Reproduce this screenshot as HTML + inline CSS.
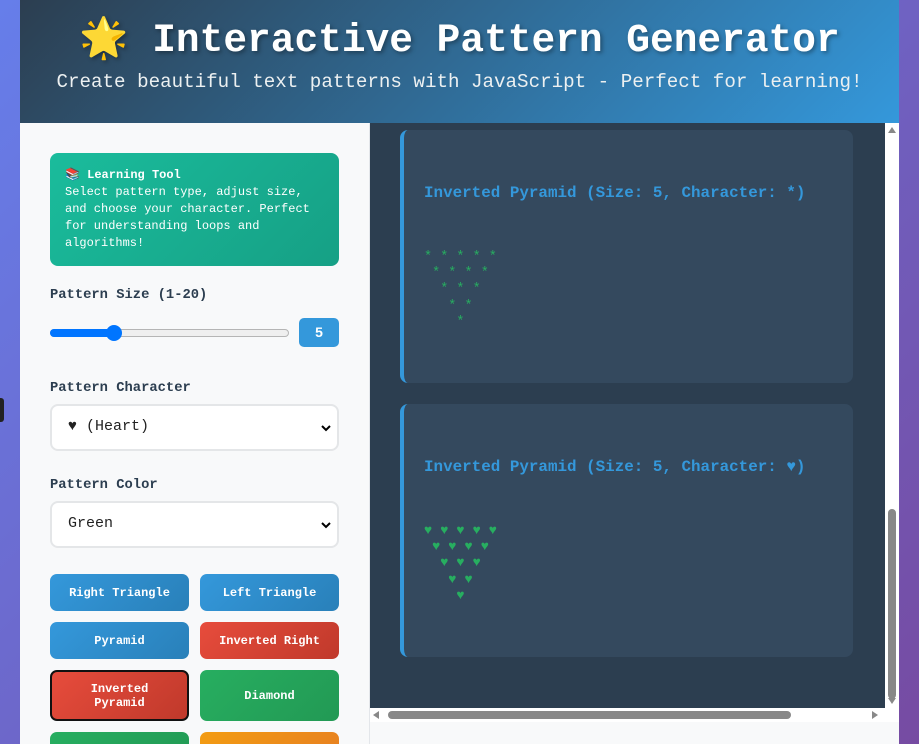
<!DOCTYPE html>
<html><head><meta charset="utf-8"><style>
*{box-sizing:border-box;margin:0;padding:0}
body{width:919px;height:744px;overflow:hidden;background:linear-gradient(135deg,#667eea,#764ba2);font-family:"Liberation Mono","Courier New",monospace;position:relative}
.wrap{position:absolute;left:20px;top:0;width:879px;height:744px;background:#f8f9fa;overflow:hidden}
.hdr{position:absolute;left:0;top:0;width:879px;height:123px;background:linear-gradient(135deg,#2c3e50,#3498db);color:#fff;text-align:center}
.hdr h1{position:absolute;top:14px;width:100%;font-size:39.5px;font-weight:bold;text-shadow:2px 2px 4px rgba(0,0,0,.35);white-space:nowrap}
.hdr p{position:absolute;top:71px;width:100%;font-size:19.2px;color:#ecf0f1;white-space:nowrap}
.left{position:absolute;left:0;top:123px;width:350px;height:621px;background:#f8f9fa;border-right:1px solid #e3e6ea}
.info{position:absolute;left:30px;top:30px;width:289px;height:113px;border-radius:8px;background:linear-gradient(135deg,#1abc9c,#16a085);color:#fff;font-size:12px;line-height:17px;padding:14px 12px 0 15px}
.lbl{position:absolute;left:30px;font-size:13.8px;font-weight:bold;color:#2c3e50}
.sel{position:absolute;left:30px;width:289px;height:47px;background:#fff;border:2px solid #e4e6e8;border-radius:8px;font-size:15px;color:#222;padding:12px 16px}
.sel svg{position:absolute;right:6px;top:18px}
.btn{position:absolute;width:139px;border-radius:7px;color:#fff;font-size:12px;font-weight:bold;display:flex;align-items:center;justify-content:center;text-align:center;line-height:14px}
.b{background:linear-gradient(135deg,#3498db,#2980b9)}
.r{background:linear-gradient(135deg,#e74c3c,#c0392b)}
.g{background:linear-gradient(135deg,#27ae60,#229954)}
.o{background:linear-gradient(135deg,#f39c12,#e67e22)}
.right{position:absolute;left:350px;top:123px;width:515px;height:585px;background:#2c3e50}
.card{position:absolute;left:30px;width:453px;height:253px;background:#34495e;border-left:4px solid #3498db;border-radius:8px}
.card h3{position:absolute;left:20px;top:54px;font-size:15.9px;color:#3498db;font-weight:bold;white-space:pre}
.card pre{position:absolute;left:20px;top:120px;font-family:"Liberation Mono",monospace;font-size:13.5px;line-height:16.2px;color:#27ae60}
.vs{position:absolute;left:865px;top:123px;width:14px;height:585px;background:#fff}
.hs{position:absolute;left:350px;top:708px;width:515px;height:14px;background:#fff}
</style></head><body>
<div style="position:absolute;left:0;top:398px;width:4px;height:24px;background:#222;border-radius:0 3px 3px 0"></div>
<div class="wrap">
<div class="hdr"><h1>🌟 Interactive Pattern Generator</h1><p>Create beautiful text patterns with JavaScript - Perfect for learning!</p></div>
<div class="left">
<div class="info"><b>📚 Learning Tool</b><br>Select pattern type, adjust size, and choose your character. Perfect for understanding loops and algorithms!</div>
<div class="lbl" style="top:165px">Pattern Size (1-20)</div>
<div style="position:absolute;left:30px;top:206px;width:239px;height:8px;border-radius:4px;background:#efefef;border:1px solid #b5b5b5"></div>
<div style="position:absolute;left:30px;top:206px;width:64px;height:8px;border-radius:4px;background:#0075ff"></div>
<div style="position:absolute;left:86px;top:202px;width:16px;height:16px;border-radius:50%;background:#0075ff"></div>
<div style="position:absolute;left:279px;top:195px;width:40px;height:29px;border-radius:5px;background:#3498db;color:#fff;font-family:'Liberation Sans',sans-serif;font-weight:bold;font-size:14px;text-align:center;line-height:29px">5</div>
<div class="lbl" style="top:258px">Pattern Character</div>
<div class="sel" style="top:281px">♥ (Heart)<svg width="10" height="8" viewBox="0 0 10 8"><path d="M1 2l4 4 4-4" stroke="#000" stroke-width="2" fill="none"/></svg></div>
<div class="lbl" style="top:355px">Pattern Color</div>
<div class="sel" style="top:378px">Green<svg width="10" height="8" viewBox="0 0 10 8"><path d="M1 2l4 4 4-4" stroke="#000" stroke-width="2" fill="none"/></svg></div>
<div class="btn b" style="left:30px;top:451px;height:37px">Right Triangle</div>
<div class="btn b" style="left:180px;top:451px;height:37px">Left Triangle</div>
<div class="btn b" style="left:30px;top:499px;height:37px">Pyramid</div>
<div class="btn r" style="left:180px;top:499px;height:37px">Inverted Right</div>
<div class="btn r" style="left:30px;top:547px;height:51px;border:2px solid #111">Inverted<br>Pyramid</div>
<div class="btn g" style="left:180px;top:547px;height:51px">Diamond</div>
<div class="btn g" style="left:30px;top:609px;height:37px"></div>
<div class="btn o" style="left:180px;top:609px;height:37px"></div>
</div>
<div class="right">
<div class="card" style="top:7px"><h3>Inverted Pyramid (Size: 5, Character: *)</h3><pre>* * * * *
 * * * *
  * * *
   * *
    *</pre></div>
<div class="card" style="top:281px"><h3>Inverted Pyramid (Size: 5, Character: ♥)</h3><pre>♥ ♥ ♥ ♥ ♥
 ♥ ♥ ♥ ♥
  ♥ ♥ ♥
   ♥ ♥
    ♥</pre></div>
</div>
<div class="vs"><div style="position:absolute;left:3px;top:4px;width:0;height:0;border:4px solid transparent;border-bottom:6px solid #888;border-top:0"></div>
<div style="position:absolute;left:3px;top:386px;width:8px;height:190px;border-radius:4px;background:#888"></div>
<div style="position:absolute;left:3px;top:575px;width:0;height:0;border:4px solid transparent;border-top:6px solid #888;border-bottom:0"></div></div>
<div class="hs"><div style="position:absolute;left:3px;top:3px;border:4px solid transparent;border-right:6px solid #888;border-left:0"></div>
<div style="position:absolute;left:18px;top:3px;width:403px;height:8px;border-radius:4px;background:#888"></div>
<div style="position:absolute;left:502px;top:3px;border:4px solid transparent;border-left:6px solid #888;border-right:0"></div></div>
<div style="position:absolute;left:865px;top:708px;width:14px;height:14px;background:#fff"></div>
</div>
</body></html>
